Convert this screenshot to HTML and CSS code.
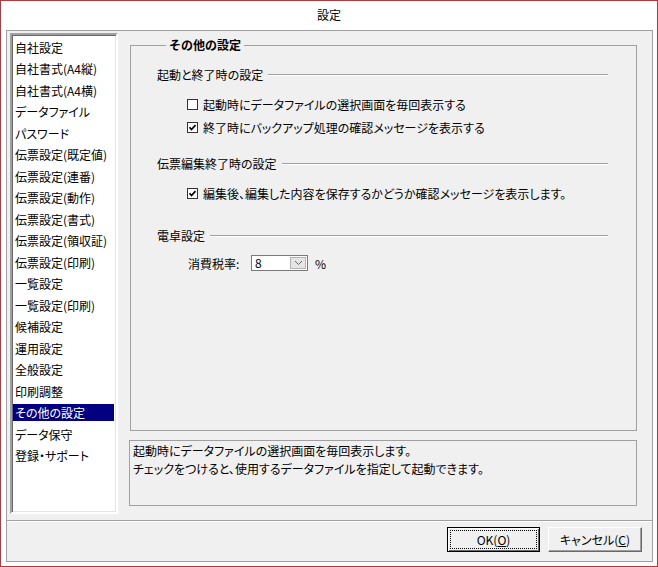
FILE: index.html
```html
<html>

<head>
<meta charset="UTF-8">
<meta name="viewport" content="width=device-width, initial-scale=1.0">
<title>設定</title>
<link rel="stylesheet" href="styles.css">
</head>
<body>
<div class="window">
  <div class="titlebar">設定</div>
  <div class="frame">
    <div class="main">
      <ul class="menu">
        <li>自社設定</li>
        <li>自社書式(A4縦)</li>
        <li>自社書式(A4横)</li>
        <li>データファイル</li>
        <li>パスワード</li>
        <li>伝票設定(既定値)</li>
        <li>伝票設定(連番)</li>
        <li>伝票設定(動作)</li>
        <li>伝票設定(書式)</li>
        <li>伝票設定(領収証)</li>
        <li>伝票設定(印刷)</li>
        <li>一覧設定</li>
        <li>一覧設定(印刷)</li>
        <li>候補設定</li>
        <li>運用設定</li>
        <li>全般設定</li>
        <li>印刷調整</li>
        <li class="selected">その他の設定</li>
        <li>データ保守</li>
        <li>登録・サポート</li>
      </ul>
      <div class="pane">
        <fieldset class="group">
          <legend>その他の設定</legend>
          <!-- 起動と終了 -->
          <div class="heading h1"><span>起動と終了時の設定</span><i class="rule"></i></div>
          <label class="check c1">
            <svg width="11" height="11" viewBox="0 0 11 11"><rect x="0.5" y="0.5" width="10" height="10" fill="#fff" stroke="#333"/></svg>
            起動時にデータファイルの選択画面を毎回表示する
          </label>
          <label class="check c2">
            <svg width="11" height="11" viewBox="0 0 11 11"><rect x="0.5" y="0.5" width="10" height="10" fill="#fff" stroke="#333"/><path d="M2.5 5.3 L4.5 7.5 L8.5 3.2" fill="none" stroke="#000" stroke-width="1.7"/></svg>
            終了時にバックアップ処理の確認メッセージを表示する
          </label>
          <!-- 伝票編集 -->
          <div class="heading h2"><span>伝票編集終了時の設定</span><i class="rule"></i></div>
          <label class="check c3">
            <svg width="11" height="11" viewBox="0 0 11 11"><rect x="0.5" y="0.5" width="10" height="10" fill="#fff" stroke="#333"/><path d="M2.5 5.3 L4.5 7.5 L8.5 3.2" fill="none" stroke="#000" stroke-width="1.7"/></svg>
            編集後、編集した内容を保存するかどうか確認メッセージを表示します。
          </label>
          <!-- 電卓 -->
          <div class="heading h3"><span>電卓設定</span><i class="rule"></i></div>
          <div class="tax">
            <span class="tax-label">消費税率:</span>
            <div class="combo">
              <span class="combo-value">8</span>
              <span class="combo-button">
                <svg width="9" height="6" viewBox="0 0 9 6"><path d="M1 1 L4.5 4.5 L8 1" fill="none" stroke="#666" stroke-width="1"/></svg>
              </span>
            </div>
            <span class="unit">%</span>
          </div>
        </fieldset>
        <div class="help">
          <div class="help-line">起動時にデータファイルの選択画面を毎回表示します。</div>
          <div class="help-line">チェックをつけると、使用するデータファイルを指定して起動できます。</div>
        </div>
      </div>
    </div>
    <div class="actions">
      <button class="btn default">OK(<u>O</u>)</button>
      <button class="btn">キャンセル(<u>C</u>)</button>
    </div>
  </div>
</div>
</body>
</html>
```

FILE: styles.css
```css
* {
  box-sizing: border-box;
}

body {
  margin: 0;
  font-family: "Noto Sans CJK JP", sans-serif;
  font-size: 12px;
  color: #000;
  font-feature-settings: "palt";
}

.window {
  width: 658px;
  height: 567px;
  border: 1px solid #b4393f;
  background-color: #fff;
  display: flex;
  flex-direction: column;
}

.titlebar {
  height: 29px;
  line-height: 28px;
  text-align: center;
}

.frame {
  flex: 1;
  margin: 0 4px 4px 5px;
  border: 1px solid #a0a0a0;
  background-color: #f0f0f0;
  display: flex;
  flex-direction: column;
}

.main {
  height: 489px;
  display: flex;
  padding: 2px 0 0 3px;
}

.menu {
  width: 108px;
  height: 481px;
  margin: 0;
  padding: 3.5px 0 0;
  list-style: none;
  background-color: #fff;
  border: 2px solid;
  border-color: #a0a0a0 #fff #fff #a0a0a0;
  box-shadow: inset 1px 1px #696969, inset -1px -1px #e3e3e3;
}

.menu li {
  width: 101px;
  height: 17px;
  line-height: 17px;
  margin: 0 0 4.5px 1px;
  padding-left: 2px;
  white-space: nowrap;
}

.menu .selected {
  background-color: #000080;
  color: #fff;
}

.pane {
  flex: 1;
  display: flex;
  flex-direction: column;
  padding: 5px 15px 14px 12px;
}

.group {
  flex: 1;
  min-width: 0;
  margin: 0;
  padding: 0 28px 0 26px;
  border: 1px solid #a0a0a0;
}

.group legend {
  height: 14px;
  margin-left: 9px;
  padding: 0 3px;
  line-height: 14px;
  font-weight: bold;
  font-feature-settings: normal;
}

.heading {
  display: flex;
  align-items: center;
  height: 16px;
  line-height: 16px;
  white-space: nowrap;
}

.heading .rule {
  flex: 1;
  height: 2px;
  margin-left: 5px;
  border-top: 1px solid #a0a0a0;
  border-bottom: 1px solid #fff;
}

.h1 { margin-top: 15px; }
.h2 { margin-top: 21px; }
.h3 { margin-top: 27px; }

.check {
  display: flex;
  align-items: center;
  gap: 5px;
  height: 16px;
  margin-left: 30px;
  white-space: nowrap;
}

.c1 { margin-top: 13px; }
.c2 { margin-top: 7px; }
.c3 { margin-top: 13px; }

.tax {
  display: flex;
  align-items: center;
  height: 16px;
  margin: 11px 0 0 31px;
}

.tax-label {
  width: 63px;
}

.combo {
  width: 57px;
  height: 16px;
  display: flex;
  border: 1px solid #7a7a7a;
  background-color: #fff;
}

.combo-value {
  flex: 1;
  padding-left: 3px;
  line-height: 14px;
}

.combo-button {
  width: 16px;
  margin: 1px;
  display: flex;
  align-items: center;
  justify-content: center;
  background-color: #e5e5e5;
  border: 1px solid #b4b4b4;
}

.unit {
  margin-left: 7px;
}

.help {
  height: 66px;
  margin: 9px 0 0 -1px;
  padding: 1px 3px;
  border: 1px solid #a0a0a0;
  white-space: nowrap;
}

.help-line {
  height: 17.5px;
  line-height: 17.5px;
}

.actions {
  flex: 1;
  display: flex;
  justify-content: flex-end;
  gap: 8px;
  padding: 6px 10px 0 0;
  border-top: 1px solid #a0a0a0;
  box-shadow: inset 0 1px #fff;
}

.btn {
  width: 94px;
  height: 25px;
  font: inherit;
  color: #000;
  background-color: #f0f0f0;
  border: 1px solid;
  border-color: #fff #696969 #696969 #fff;
  box-shadow: inset -1px -1px #a0a0a0;
}

.btn.default {
  width: 93px;
  border-color: #000;
  box-shadow: inset 1px 1px #fff, inset -1px -1px #696969;
  outline: 1px dotted #000;
  outline-offset: -4px;
}
```
